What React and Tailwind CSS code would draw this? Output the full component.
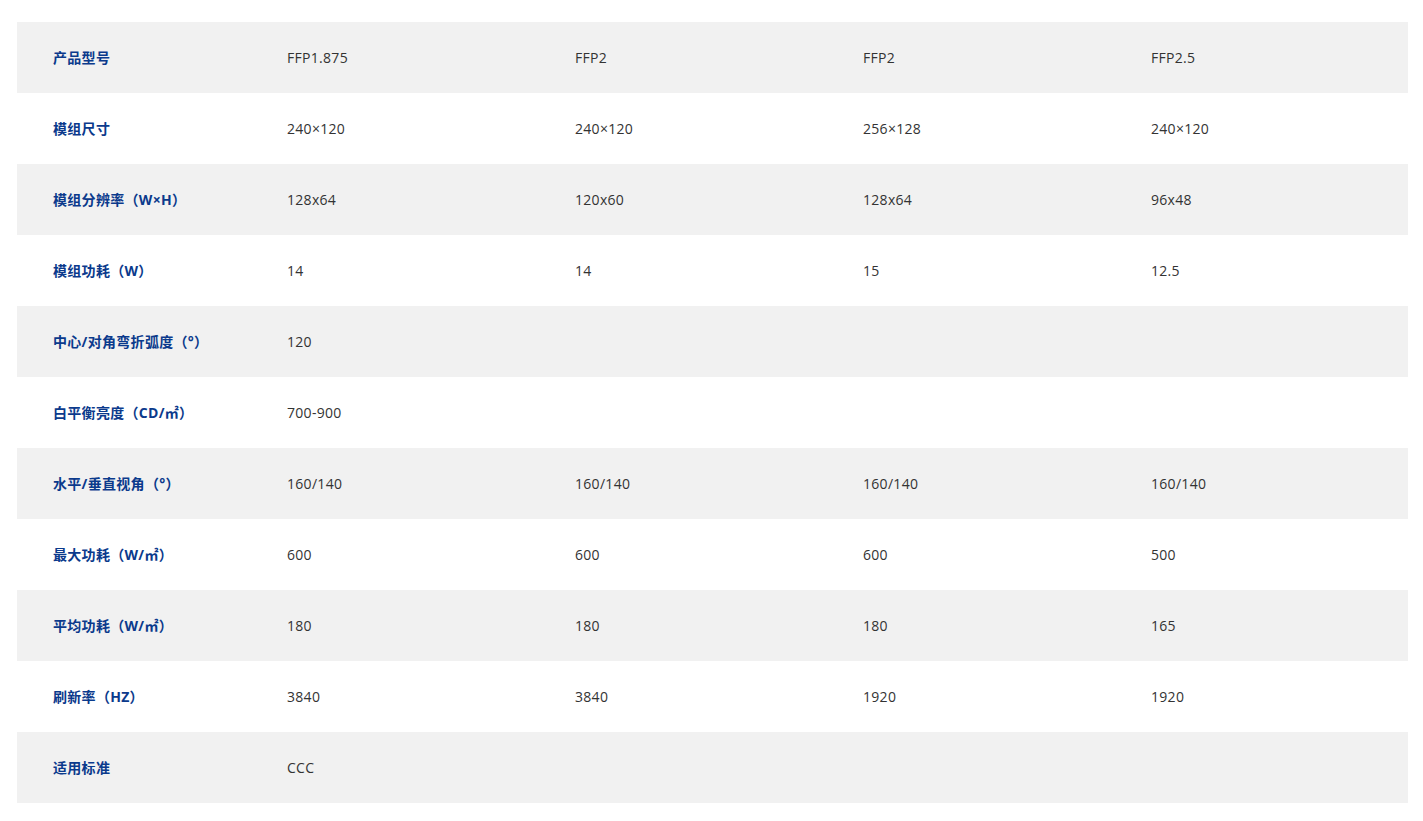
import React from "react";

const rows = [
  ["产品型号", "FFP1.875", "FFP2", "FFP2", "FFP2.5"],
  ["模组尺寸", "240×120", "240×120", "256×128", "240×120"],
  ["模组分辨率（W×H）", "128x64", "120x60", "128x64", "96x48"],
  ["模组功耗（W）", "14", "14", "15", "12.5"],
  ["中心/对角弯折弧度（°）", "120", "", "", ""],
  ["白平衡亮度（CD/㎡）", "700-900", "", "", ""],
  ["水平/垂直视角（°）", "160/140", "160/140", "160/140", "160/140"],
  ["最大功耗（W/㎡）", "600", "600", "600", "500"],
  ["平均功耗（W/㎡）", "180", "180", "180", "165"],
  ["刷新率（HZ）", "3840", "3840", "1920", "1920"],
  ["适用标准", "CCC", "", "", ""],
];

export default function App(){
  return (
    <div className="min-h-screen bg-white pt-[22px] pl-[17px]" style={{fontFamily:'"Open Sans","Noto Sans CJK SC",sans-serif'}}>
      <div className="w-[1391px]">
        {rows.map((r, i) => (
          <div key={i} className={"grid grid-cols-[234px_288px_288px_288px_1fr] h-[71px] items-center text-[14px] " + (i % 2 === 0 ? "bg-[#f1f1f1]" : "bg-white")}>
            <div className="pl-[36px] font-bold text-[#0b3a8c] tracking-[0.3px]">{r[0]}</div>
            {r.slice(1).map((c, j) => (
              <div key={j} className="pl-[36px] text-[#333] tracking-[0.3px]">{c}</div>
            ))}
          </div>
        ))}
      </div>
    </div>
  );
}
